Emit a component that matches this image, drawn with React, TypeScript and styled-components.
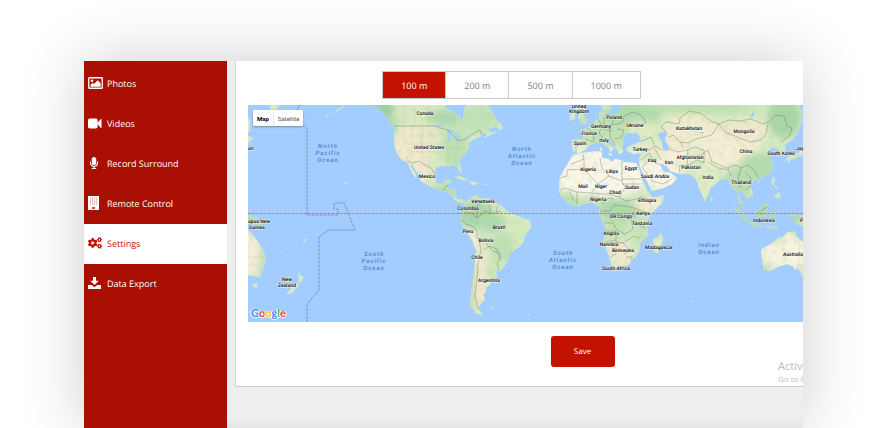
import React, { useState } from "react";
import styled, { createGlobalStyle } from "styled-components";
import { FaCogs, FaMicrophone } from "react-icons/fa";

const GlobalStyle = createGlobalStyle`
  * { box-sizing: border-box; }
  body { margin: 0; background: #fff; font-family: "Open Sans", "Noto Sans", sans-serif; }
  button { font-family: inherit; cursor: pointer; }
`;

const Page = styled.div`
  display: flex;
  height: 100vh;
  padding: 61px 83px 0 84px;
  overflow: hidden;
`;

const Shell = styled.div`
  display: flex;
  flex: 1;
  min-width: 0;
  background: #eee;
  box-shadow: 0 0 60px rgba(0, 0, 0, 0.2);
`;

const Sidebar = styled.nav`
  flex: 0 0 143px;
  padding-top: 3px;
  background: #a90f02;
`;

const NavLink = styled.a<{ $active: boolean }>`
  display: flex;
  align-items: center;
  height: 40px;
  padding: 0 0 2px 4px;
  font-size: 9px;
  text-rendering: geometricPrecision;
  text-decoration: none;
  color: ${(p) => (p.$active ? "#c41200" : "#fff")};
  background: ${(p) => (p.$active ? "#fff" : "transparent")};
`;

const NavIcon = styled.span`
  display: flex;
  flex: 0 0 19px;
`;

const Main = styled.main`
  display: flex;
  flex-direction: column;
  flex: 1;
  min-width: 0;
  padding-left: 8px;
  background: linear-gradient(#eee, #eee calc(100% - 12px), #e6e6e6);
`;

const Card = styled.section`
  position: relative;
  padding: 10px 0 19px 12px;
  overflow: hidden;
  background: #fff;
  border-left: 1px solid #d2d2d2;
  border-bottom: 1px solid #ccc;
`;

const SegmentRow = styled.div`
  display: flex;
  justify-content: center;
  padding: 0 28px 6px 0;
`;

const Segments = styled.div`
  display: flex;
  border: 1px solid #c9cccc;
`;

const Segment = styled.button<{ $active: boolean }>`
  height: 26px;
  padding: 0 18px;
  border: 0;
  border-left: 1px solid #c9cccc;
  font-size: 9px;
  text-rendering: geometricPrecision;
  color: ${(p) => (p.$active ? "#fff" : "#7d8383")};
  background: ${(p) => (p.$active ? "#c41200" : "#fff")};
  &:first-child { border-left: 0; }
`;

const MapFrame = styled.div`
  position: relative;
  height: 217px;
  overflow: hidden;
  background: #a3ccff;
`;

const MapSvg = styled.svg`
  display: block;
  width: 100%;
  height: 100%;
  text-rendering: geometricPrecision;
`;

const MapTypes = styled.div`
  position: absolute;
  top: 5px;
  left: 5px;
  display: flex;
  background: #fff;
  border-radius: 1px;
  box-shadow: 0 1px 2px rgba(0, 0, 0, 0.3);
`;

const MapType = styled.button<{ $active: boolean }>`
  height: 16px;
  padding: 0 4px;
  border: 0;
  font-family: Roboto, sans-serif;
  font-size: 6px;
  font-weight: ${(p) => (p.$active ? 700 : 400)};
  color: ${(p) => (p.$active ? "#000" : "#565656")};
  background: transparent;
  & + & { border-left: 1px solid #e6e6e6; }
`;

const Logo = styled.a`
  position: absolute;
  left: 3px;
  bottom: 0;
  font-family: Lato, sans-serif;
  font-size: 11px;
  font-weight: 700;
  line-height: 16px;
  text-rendering: geometricPrecision;
  text-decoration: none;
  text-shadow: 0 0 1px #fff, 1px 0 1px #fff, -1px 0 1px #fff, 0 1px 1px #fff;
`;

const Letter = styled.span<{ $color: string }>`
  color: ${(p) => p.$color};
`;

const Actions = styled.div`
  display: flex;
  justify-content: center;
  padding: 14px 0 0 114px;
`;

const SaveButton = styled.button`
  width: 64px;
  height: 31px;
  border: 0;
  border-radius: 3px;
  font-size: 8px;
  text-rendering: geometricPrecision;
  color: #fff;
  background: #c41200;
`;

const Watermark = styled.div`
  position: absolute;
  right: 0;
  bottom: 1px;
  width: 25px;
  overflow: hidden;
  font-size: 8px;
  line-height: 12px;
  white-space: nowrap;
  color: #bbb;
`;

const WatermarkTitle = styled.div`
  font-size: 11px;
  line-height: 14px;
`;

const ImageIcon = () => (
  <svg width="15" height="12" viewBox="0 0 15 12" aria-hidden="true">
    <rect x="0.75" y="0.75" width="13.5" height="10.5" rx="0.6" fill="none" stroke="currentColor" strokeWidth="1.3" />
    <circle cx="4" cy="3.8" r="1.3" fill="currentColor" />
    <path d="M2.5 9.8V8l2.2-2.2 1.3 1.3 3.6-3.8 3 3v3.5z" fill="currentColor" />
  </svg>
);

const VideoIcon = () => (
  <svg width="14" height="11" viewBox="0 0 14 11" aria-hidden="true" fill="currentColor">
    <rect x="0" y="0.5" width="9.6" height="10" rx="1.8" />
    <path d="M9 5.5 12.6 1.3Q13.5.6 13.5 1.6v7.8q0 1-.9.3z" />
  </svg>
);

const KeypadIcon = () => (
  <svg width="11" height="14" viewBox="0 0 11 14" aria-hidden="true">
    <path d="M0 0h11v14H0z" fill="currentColor" />
    {[2, 4, 6, 8].map((y) => (
      <path key={y} d={`M2 ${y}h1.2M4 ${y}h1.2M6 ${y}h1.2M8 ${y}h1.2`} stroke="#d58a84" strokeWidth="1" />
    ))}
    <path d="M4 11h3v2H4z" fill="#c4574e" />
  </svg>
);

const DownloadIcon = () => (
  <svg width="13" height="12" viewBox="0 0 13 12" aria-hidden="true" fill="currentColor">
    <path d="M5 0h3v3.8h2.8L6.5 8 2.2 3.8H5z" />
    <path d="M0 8h3.8l2.7 2.2L9.2 8H13v4H0z" />
  </svg>
);

const navItems = [
  { label: "Photos", icon: <ImageIcon /> },
  { label: "Videos", icon: <VideoIcon /> },
  { label: "Record Surround", icon: <FaMicrophone size={12} width={9} /> },
  { label: "Remote Control", icon: <KeypadIcon /> },
  { label: "Settings", icon: <FaCogs size={14} /> },
  { label: "Data Export", icon: <DownloadIcon /> },
];

const land = [
  // North and Central America
  "M369 104L378 108 382 112 387 117 390 123 395 128 394 134 394 140 395 148 398 155 402 160 407 162 410 168 413 174 416 178 415 173 411 167 410 163 413 166 417 172 420 177 421 181 426 184 431 187 437 189 443 191 448 193 452 195 454 200 458 202 463 203 466 205 466 202 461 199 456 199 456 190 448 189 448 185 450 183 451 180 446 180 443 184 437 184 435 179 435 173 436 168 440 166 447 166 449 167 452 165 457 166 460 173 462 172 460 164 459 160 465 154 469 148 468 144 471 141 477 138 481 136 484 132 487 135 484 138 491 135 496 132 490 132 488 128 493 128 499 124 496 118 492 112 490 108 487 104 467 104 464 110 464 116 462 121 459 116 452 112 446 108 445 104Z",
  "M496 127L500 122 503 128 501 130Z",
  "M455 177L461 176 469 181 462 180ZM470 181L479 183 475 185 470 184ZM484 184H487V185H484Z",
  // South America
  "M464 207L467 201 472 197 475 195 480 198 490 199 497 203 503 207 508 212 520 217 530 221 531 227 525 235 523 243 518 248 510 253 508 260 503 268 500 271 496 270 497 276 495 280 490 281 490 285 486 287 486 292 483 295 485 299 480 305 478 308 483 315 475 313 470 305 471 295 473 280 475 263 476 250 472 240 467 233 461 223 460 218 463 212Z",
  // Africa
  "M573 155L582 153 598 151 602 153 602 158 608 159 612 162 615 159 620 160 624 162 636 163 639 169 642 180 647 190 652 197 658 197 664 195 662 203 656 209 650 215 647 223 648 235 640 243 639 252 633 260 628 265 620 269 613 268 611 263 608 253 603 242 606 230 602 220 599 212 601 207 595 204 592 202 577 206 568 203 560 195 559 188 560 177 567 165 570 160Z",
  "M653 240L658 237 661 233 663 239 658 253 654 252Z",
  // Europe and Asia
  "M572 140L583 139 583 135 580 131 587 128 592 124 597 120 600 117 599 112 603 111 605 117 613 115 618 114 620 108 627 104 799 104 802 112 802 121 798 132 792 140 785 145 786 154 781 155 778 149 772 147 768 152 771 159 773 167 768 175 757 179 753 181 751 186 753 194 748 199 743 193 739 190 739 197 743 203 745 209 739 203 737 192 732 187 727 178 720 180 710 188 709 193 705 201 700 190 696 179 690 174 680 174 670 171 663 164 659 163 664 172 671 173 677 178 672 184 663 188 652 191 648 183 640 167 639 160 641 153 634 154 627 151 627 147 635 144 642 141 639 137 633 137 635 133 627 133 624 137 623 142 622 148 623 152 620 154 616 148 613 144 608 138 604 137 609 144 614 148 611 152 608 147 602 143 598 142 592 144 588 146 585 150 579 153 573 151Z",
  "M602 104L602 109 606 114 609 112 613 104ZM608 153L612 154 611 156ZM600 147H602V151H600Z",
  "M577 104L575 108 579 114 578 119 582 121 580 125 588 122 584 116 582 110 583 104ZM570 115L575 112 575 119 570 121Z",
  "M711 196L713 200 711 202Z",
  "M786 158L792 154 799 153 803 148V155L796 158 790 160 789 163Z",
  "M772 177L775 178 774 185 778 188 777 189 772 184ZM774 196L779 192 781 197 777 199ZM757 181L760 180 759 183Z",
  // Indonesia and Oceania
  "M733 206L738 208 744 215 749 222 748 223 743 219 737 211ZM749 223L762 225 762 227 750 225ZM754 213L759 211 764 203 768 206 765 217 757 216ZM770 213L776 212 773 216 776 220 771 219 770 224ZM765 227L779 226 776 229ZM789 214L795 215 803 217V226L796 224 793 218Z",
  "M761 252L762 249 773 243 778 238 783 237 788 232 795 232 797 237 803 242V277L798 268 795 270 793 266 787 264 777 267 770 271 764 270Z",
  "M247 215L254 217 261 222 263 227 255 224 247 223ZM247 230L251 232 255 238 262 248 266 258 263 268 260 277 247 275ZM253 283L258 284 256 288 253 286Z",
  "M298 271L301 276 304 277 300 283 298 281 299 276ZM297 283L299 285 291 294 286 294Z",
  // Northern islands
  "M270 104L281 104 277 108 273 115 270 110ZM247 116L250 120 250 131 247 133ZM247 135L253 138 248 144ZM325 116L329 113 327 116ZM333 113L342 107 346 105 338 111Z",
  "M285 247L287 249 285 248ZM303 240L307 239 304 242ZM491 307H494V308H491ZM528 314H530V315H528ZM692 301H694V302H692ZM345 182H347V184H345Z",
].join("");

const water =
  "M622 140L626 133 631 135 636 132 641 138 636 142 629 141ZM658 134L665 131 668 134 665 137 666 143 669 146 668 151 663 150 662 143ZM665 164L670 170 667 171ZM433 127Q441 122 446 130Q450 128 455 132L460 137 457 141 455 133 450 132 450 142 448 141 447 130 440 126ZM699 132L705 132 702 134ZM750 116L756 109 753 117ZM632 213H636V218H632ZM464 138L471 134 467 138Z";

const borders = [
  "M394 126H437L440 128 448 130 458 141 466 139 473 134 480 130 482 136M407 161L413 163 419 161 425 165 431 168 435 174M443 191L446 186 450 185 453 189",
  "M464 213L471 213 477 218 477 206 482 202M461 220L466 224 472 226 477 231 477 238 486 241 487 245 493 251 500 253 501 258 497 263 499 270M477 218L485 211 491 214 501 211M479 240L481 250 478 264 477 280 475 295 478 309M491 214L489 205M496 213L498 205M484 250L489 246 497 249 500 260",
  "M571 164L584 159 583 154M584 159V169L567 170V176L560 178M584 169L598 184 591 193 577 192 565 188 560 190M598 184L609 176 602 168 600 158M609 176L622 181V162M622 181L625 188 619 197 608 194 603 194 592 193M622 184H640M622 179H641M619 197L626 201 637 199 643 197 651 204M592 193V202M577 192V205M569 191L574 201M602 204L609 198 614 199M600 211H610L614 205 625 206 634 208 650 214M604 223H613L617 230 625 234 633 229 631 218 634 211M605 231H616V240L605 242M616 240V254L610 257M616 242L623 243 630 250 624 254M623 243L634 236 640 238M633 223L646 228M626 257L632 257 632 262",
  "M576 141V152M585 139L593 142M587 128L593 133 594 142M598 119L602 126 599 133 603 138M604 117V126L612 125 615 116M612 125L622 123 624 116 633 112 641 115 646 122 640 127M610 126V137L615 145M617 129L624 130 622 137M622 137L615 139M603 129L612 131M642 141L651 137 654 144M642 151L651 149 655 146 662 150M641 160L649 153 655 163 661 165M647 162L642 167 652 181 663 184 672 179M655 149L661 160M668 148L677 152 688 150 687 166 679 166 680 173M687 166L697 160 704 163 704 150 695 147 688 150M666 132L661 127 666 122 679 124 680 118 689 111 700 113 711 121 719 124 712 135 696 139 688 143 680 142M668 137L674 135 684 148M719 124L729 120 740 121 751 119 763 124 770 121 775 115 784 116 787 126 792 128 790 135 781 142M719 124L725 132 737 137 750 142 761 140 766 134 768 124M696 158L708 150 712 162 727 168 736 165 741 168 748 165 754 170 759 179M708 162L718 168 728 170M728 168L731 176M741 168L738 178 740 188M745 172L751 178 751 186 745 190M757 214L762 210 767 207",
].join("");

const stateLines =
  "M404 126V144L399 152M412 126V160M422 126V161M430 126V165M398 136H438M404 144H440M410 152H442M440 148H466M448 142V166M456 142V164M784 236V265M799 238V268M785 253H803M251 231V245M248 257H265M404 105V126M415 105V126M428 105V126M441 110V127";

type Patch = [number, number, number, number, string];
const patches: Patch[] = [
  [380, 109, 14, 13, "#9ccfa5"], [391, 128, 7, 12, "#b5dab0"], [418, 116, 19, 12, "#d9e8c0"], [445, 118, 18, 8, "#aed8ae"],
  [478, 118, 20, 15, "#bfe2b8"], [455, 147, 13, 20, "#bce0b3"], [410, 146, 20, 20, "#f3e9cd"], [431, 142, 9, 18, "#e9e8c5"],
  [420, 172, 11, 13, "#f2e8cf"], [448, 190, 14, 8, "#b8ddb2"], [476, 215, 18, 14, "#a9d6ac"], [492, 223, 14, 10, "#b1daae"],
  [515, 228, 12, 14, "#d6e9bc"], [503, 248, 12, 14, "#bfdfb4"], [472, 240, 6, 10, "#f4ecd3"], [481, 265, 6, 20, "#f4e9cf"],
  [481, 292, 8, 18, "#f2e7cb"], [472, 290, 2, 26, "#add6a9"], [494, 268, 9, 11, "#cde6bb"],
  [600, 174, 48, 25, "#fbf6e9"], [590, 201, 31, 5, "#c6e3b5"], [618, 211, 19, 12, "#aed8ab"], [615, 231, 15, 9, "#c5e2b4"],
  [650, 204, 12, 8, "#f3ebd0"], [620, 253, 12, 12, "#f3eacf"], [641, 230, 8, 16, "#c6e3b7"], [568, 200, 10, 7, "#bcdfb3"],
  [662, 175, 20, 16, "#fbf6e9"], [606, 128, 30, 20, "#c3e2b6"], [578, 146, 8, 7, "#e9eac9"], [634, 113, 28, 14, "#b2daae"],
  [641, 129, 14, 8, "#e4ebc6"], [650, 149, 24, 5, "#f0e8cd"], [676, 156, 16, 15, "#f6eed7"], [692, 131, 30, 18, "#f2ebcf"],
  [698, 107, 56, 7, "#bfe0b1"], [731, 149, 30, 20, "#f5edd4"], [744, 130, 27, 11, "#f0e8cd"], [784, 118, 17, 20, "#a9d6a9"],
  [759, 166, 19, 14, "#b5dcb1"], [705, 182, 12, 20, "#e0ecc5"], [739, 182, 13, 17, "#b8deb1"], [760, 214, 50, 15, "#b1daad"],
  [784, 253, 24, 20, "#f8f2de"], [773, 240, 12, 5, "#e0ebc2"], [765, 268, 6, 4, "#c1dfb3"], [250, 254, 11, 22, "#f6efd9"],
  [264, 261, 5, 24, "#c1dfb5"], [255, 222, 12, 7, "#b1daad"], [658, 243, 6, 12, "#e4e9c1"],
];

type Label = [string, number, number];
const labels: Label[] = [
  ["Canada", 425, 115], ["United States", 429, 149], ["Mexico", 427, 178], ["Venezuela", 483, 203], ["Colombia", 468, 210],
  ["Brazil", 499, 229], ["Peru", 468, 233], ["Bolivia", 486, 242], ["Chile", 477, 259], ["Argentina", 489, 282],
  ["United", 579, 108], ["Kingdom", 579, 113], ["Poland", 614, 119], ["Germany", 601, 128], ["Ukraine", 635, 127], ["France", 589, 135],
  ["Italy", 604, 142], ["Spain", 580, 145], ["Turkey", 640, 151], ["Iraq", 652, 162], ["Iran", 669, 164], ["Algeria", 588, 171],
  ["Libya", 612, 173], ["Egypt", 631, 170], ["Saudi Arabia", 655, 178], ["Mali", 583, 188], ["Niger", 601, 188], ["Chad", 615, 194],
  ["Sudan", 632, 189], ["Nigeria", 598, 201], ["Ethiopia", 647, 202], ["Kenya", 643, 215], ["DR Congo", 621, 218],
  ["Tanzania", 642, 225], ["Angola", 611, 235], ["Namibia", 609, 246], ["Botswana", 623, 252], ["Madagascar", 659, 249],
  ["South Africa", 616, 270], ["Kazakhstan", 689, 130], ["Mongolia", 744, 133], ["China", 746, 153], ["South Korea", 781, 155],
  ["Afghanistan", 690, 159], ["Pakistan", 691, 169], ["India", 708, 179], ["Thailand", 741, 184], ["Indonesia", 764, 222],
  ["Australia", 793, 256], ["New", 287, 281], ["Zealand", 287, 287],
];
const edgeLabels: Label[] = [["an", 248, 150], ["apua New", 248, 223], ["Guinea", 249, 229], ["Jap", 796, 150], ["P", 800, 222]];
const oceans: Label[] = [
  ["North", 328, 148], ["Pacific", 328, 155], ["Ocean", 328, 162], ["North", 522, 151], ["Atlantic", 522, 158], ["Ocean", 522, 165],
  ["South", 374, 256], ["Pacific", 374, 263], ["Ocean", 374, 270], ["South", 563, 255], ["Atlantic", 563, 262], ["Ocean", 563, 269],
  ["Indian", 709, 247], ["Ocean", 709, 254],
];

const LandLabel = styled.text`
  font-family: Roboto, sans-serif;
  font-size: 5px;
  font-weight: 600;
  fill: #111;
  stroke: rgba(255, 255, 255, 0.7);
  stroke-width: 1px;
  paint-order: stroke;
`;

const OceanLabel = styled.text`
  font-family: Roboto, sans-serif;
  font-size: 6px;
  font-style: italic;
  font-weight: 500;
  letter-spacing: 1px;
  fill: #4c82c8;
`;

const WorldMap = () => (
  <MapSvg viewBox="248 105 555 217" preserveAspectRatio="xMinYMin slice" role="img" aria-label="World map">
    <defs>
      <clipPath id="land"><path d={land} /></clipPath>
      <filter id="soften" x="-30%" y="-30%" width="160%" height="160%"><feGaussianBlur stdDeviation="3" /></filter>
      <filter id="relief" x="0" y="0" width="100%" height="100%">
        <feTurbulence type="fractalNoise" baseFrequency="0.16" numOctaves={4} seed={8} />
        <feColorMatrix values="0 0 0 0 0.42  0 0 0 0 0.68  0 0 0 0 0.43  2.8 0 0 0 -1.3" />
      </filter>
    </defs>
    <rect x="248" y="105" width="555" height="217" fill="#a3ccff" />
    <path d={land} fill="#d6e9c2" stroke="#c3e0d8" strokeWidth="0.6" />
    <g clipPath="url(#land)">
      <g filter="url(#soften)">
        {patches.map(([x, y, rx, ry, color], i) => <ellipse key={i} cx={x} cy={y} rx={rx} ry={ry} fill={color} />)}
      </g>
      <rect x="248" y="105" width="555" height="217" filter="url(#relief)" opacity="0.28" />
      <path d={stateLines} fill="none" stroke="#c4b898" strokeWidth="0.5" opacity="0.5" />
      <path d={water} fill="#a3ccff" />
      <path d={borders} fill="none" stroke="#6f6f64" strokeWidth="0.6" opacity="0.65" />
    </g>
    <g fill="none" stroke="#8f86ab" strokeWidth="0.9" strokeDasharray="3 1">
      <path d="M248 213.500H803" />
      <path d="M300 105L297 110M303 125L307 128V215H338V209H334V203H344L355 230H349L346 230H328L319 237V290L307 304V322" />
    </g>
    {labels.map(([text, x, y]) => <LandLabel key={text} x={x} y={y} textAnchor="middle">{text}</LandLabel>)}
    {edgeLabels.map(([text, x, y]) => <LandLabel key={text} x={x} y={y}>{text}</LandLabel>)}
    {oceans.map(([text, x, y], i) => <OceanLabel key={i} x={x} y={y} textAnchor="middle">{text}</OceanLabel>)}
  </MapSvg>
);

const logoLetters: [string, string][] = [
  ["G", "#4285f4"], ["o", "#ea4335"], ["o", "#fbbc05"], ["g", "#4285f4"], ["l", "#34a853"], ["e", "#ea4335"],
];

export default function App() {
  const [page, setPage] = useState("Settings");
  const [radius, setRadius] = useState("100 m");
  const [mapType, setMapType] = useState("Map");

  return (
    <>
      <GlobalStyle />
      <Page>
        <Shell>
          <Sidebar>
            {navItems.map(({ label, icon }) => (
              <NavLink key={label} href="#" $active={page === label} onClick={() => setPage(label)}>
                <NavIcon>{icon}</NavIcon>
                {label}
              </NavLink>
            ))}
          </Sidebar>
          <Main>
            <Card>
              <SegmentRow>
                <Segments>
                  {["100 m", "200 m", "500 m", "1000 m"].map((value) => (
                    <Segment key={value} $active={radius === value} onClick={() => setRadius(value)}>{value}</Segment>
                  ))}
                </Segments>
              </SegmentRow>
              <MapFrame>
                <WorldMap />
                <MapTypes>
                  {["Map", "Satellite"].map((type) => (
                    <MapType key={type} $active={mapType === type} onClick={() => setMapType(type)}>{type}</MapType>
                  ))}
                </MapTypes>
                <Logo href="#">
                  {logoLetters.map(([letter, color], i) => <Letter key={i} $color={color}>{letter}</Letter>)}
                </Logo>
              </MapFrame>
              <Actions>
                <SaveButton>Save</SaveButton>
              </Actions>
              <Watermark>
                <WatermarkTitle>Activa</WatermarkTitle>
                Go to P
              </Watermark>
            </Card>
          </Main>
        </Shell>
      </Page>
    </>
  );
}
